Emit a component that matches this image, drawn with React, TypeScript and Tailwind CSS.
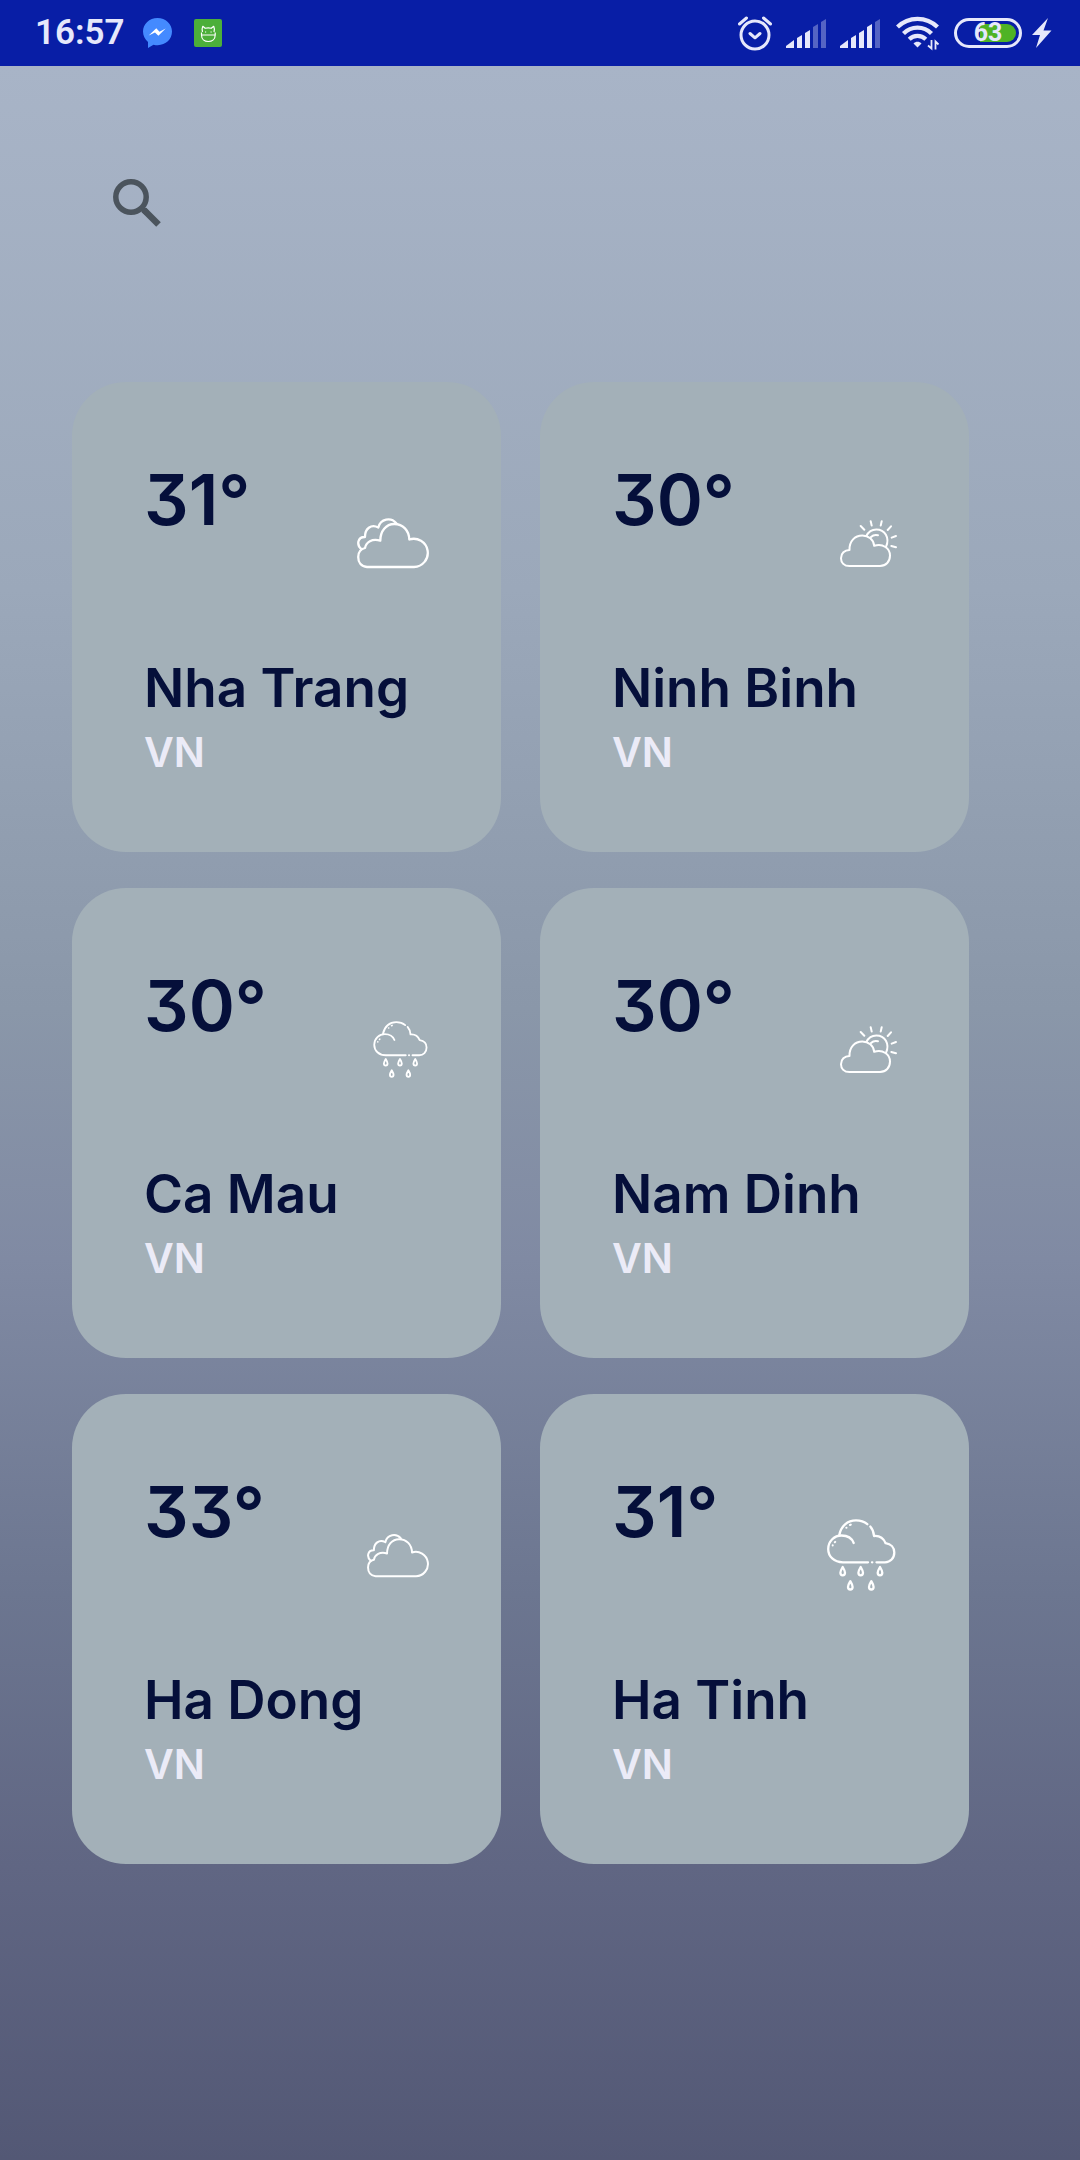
import React from "react";

type Weather = "cloud" | "partly" | "rain";

interface City {
  name: string;
  country: string;
  temp: number;
  weather: Weather;
  iconClass: string;
}

const cities: City[] = [
  { name: "Nha Trang", country: "VN", temp: 31, weather: "cloud", iconClass: "h-[52px] w-[72px]" },
  { name: "Ninh Binh", country: "VN", temp: 30, weather: "partly", iconClass: "h-[47px] w-[57px]" },
  { name: "Ca Mau", country: "VN", temp: 30, weather: "rain", iconClass: "h-[57px] w-[56px]" },
  { name: "Nam Dinh", country: "VN", temp: 30, weather: "partly", iconClass: "h-[47px] w-[57px]" },
  { name: "Ha Dong", country: "VN", temp: 33, weather: "cloud", iconClass: "h-[45px] w-[62px]" },
  { name: "Ha Tinh", country: "VN", temp: 31, weather: "rain", iconClass: "h-[72px] w-[70px]" },
];

const stroke = {
  fill: "none",
  stroke: "white",
  strokeWidth: 2.3,
  strokeLinecap: "round" as const,
  strokeLinejoin: "round" as const,
};

function CloudIcon({ className }: { className: string }) {
  return (
    <svg viewBox="0 0 72 52" className={className} aria-label="Cloudy" {...stroke}>
      <path d="M10 50C4 49.500 1.200 45 1.200 40C1.200 35 3.600 32 8 31C9 25 15 21.200 23.300 23.600C23.300 14 29 7 37.300 7C46 7 52 13.500 52.300 22.500A14.100 14.100 0 1 1 57 50Z" />
      <path d="M4.500 32.300C-1 27.500.800 19.800 8 20C7.800 12 14 6.500 21.300 10.500C23.500 1.500 34 -.200 39.300 6.200" />
    </svg>
  );
}

function PartlyIcon({ className }: { className: string }) {
  return (
    <svg viewBox="0 0 57 47" className={className} aria-label="Partly cloudy" {...stroke} strokeWidth={2}>
      <path d="M9.500 46C4 46 1 42.500 1 38.200C1 33.500 4.500 30 9.500 30C9.200 21 15 15.600 22.300 15.600C28.500 15.600 33.500 19.500 34.200 25.800C43 23 50 28.500 50 35.500C50 41.500 46 46 40 46Z" />
      <path d="M26.300 16C28.500 11.500 32 9.400 36.300 9.400C45 9.400 50 18 46 26.800" />
      <path d="M31 17C33 15 35.500 14.500 38 15.200" />
      <path d="M20.700 6L24.300 9.700M30.700 1.200L31.700 5.600M41.700 1.200L40.700 5.600M51 6.300L47.700 10M56 16L51.700 17.600M56 27.200L51.300 26" />
    </svg>
  );
}

function RainIcon({ className }: { className: string }) {
  return (
    <svg viewBox="0 0 70 72" className={className} aria-label="Rain" {...stroke}>
      <path d="M41 43.300H16C7 43.300 1.200 37.500 1.200 30C1.200 22 7.500 16.500 14.500 16.500C20.500 16.500 25 19.500 26.700 24" />
      <path d="M12.300 16C14 7 20.500 1.400 29 1.400C33.500 1.400 37.500 2.800 40.300 5.200" />
      <path d="M43.300 7.500C45.500 10 46.800 13.500 47 17C52.500 16.500 56.500 19.300 58.600 24.200C64 25 67.300 28.700 67.300 33.500C67.300 39.200 63.300 43.300 58 43.300H49.500M45 43.300H45.300" />
      <path d="M19.300 8.800H19.500M23 6L23.800 5.600M5.700 26.300V26.600M7.800 23.300L8.200 22.900" strokeWidth="2" />
      {[
        [15.7, 47],
        [33.7, 47],
        [53, 47],
        [23.3, 61.2],
        [44.3, 61.2],
      ].map(([x, y]) => (
        <path
          key={`${x}-${y}`}
          d="M0 1C-1.500 3.500-2.300 5-2.300 6.800A2.300 2.500 0 0 0 2.300 6.800C2.300 5 1.500 3.500 0 1Z"
          transform={`translate(${x} ${y})`}
        />
      ))}
    </svg>
  );
}

function WeatherIcon({ kind, className }: { kind: Weather; className: string }) {
  if (kind === "cloud") return <CloudIcon className={className} />;
  if (kind === "partly") return <PartlyIcon className={className} />;
  return <RainIcon className={className} />;
}

function Signal({ active }: { active: number }) {
  const bars = ["M0 29V27L8 21V29Z", "M11 29V19L16 16V29Z", "M19 29V14L24 11V29Z", "M27 29V8L32 5V29Z", "M35 29V3L40 0V29Z"];
  return (
    <svg viewBox="0 0 40 29" className="h-[29px] w-10" fill="#e6e8fb" aria-label="Signal">
      {bars.map((d, i) => (
        <path key={d} d={d} opacity={i < active ? 1 : 0.35} />
      ))}
    </svg>
  );
}

function StatusBar() {
  return (
    <header className="flex h-[66px] items-center justify-between bg-[#081ea6] pr-7 pl-[35px] font-[Roboto,sans-serif] text-[#e6e8fb]">
      <div className="flex items-center">
        <span className="text-[35px] leading-10 font-semibold">16:57</span>
        <svg viewBox="0 0 29 30" className="ml-[18px] h-[30px] w-[29px]" aria-label="Messenger">
          <path d="M14.500 0C6.300 0 0 6 0 13.600C0 17.800 1.900 21.500 5 24V30L10.500 26.700C20.500 29.200 29 22.600 29 13.600C29 6 22.700 0 14.500 0Z" fill="#448aff" />
          <path d="M5.700 17.600L13.300 10.300L16.500 13.700L22.700 10.500L15.400 17.700L12 14.500Z" fill="white" />
        </svg>
        <svg viewBox="0 0 28 28" className="ml-[22px] h-7 w-7" fill="none" stroke="white" strokeLinejoin="round" aria-label="App notification">
          <rect width="28" height="28" rx="2" fill="#4caf3a" stroke="none" />
          <path
            d="M8.500 13C7.800 11 8 9 8.800 7.300L11.200 9.300C13 8.700 15.500 8.700 17.300 9.300L19.700 7.300C20.500 9 20.700 11 20 13M7.500 16H21.200C21.200 20 18.200 22.500 14.300 22.500C10.400 22.500 7.500 20 7.500 16ZM7.500 16V13.500M21.200 16V13.500M11 13H12.200M16.500 13H17.700"
            strokeWidth="1.200"
          />
        </svg>
      </div>
      <div className="flex items-center">
        <svg viewBox="0 0 36 36" className="mr-[13px] h-9 w-9" fill="none" stroke="#e6e8fb" strokeWidth="3" strokeLinecap="round" strokeLinejoin="round" aria-label="Alarm">
          <circle cx="18" cy="20" r="14" />
          <path d="M2.500 9L9.500 3M33.500 9L26.500 3M13 18.500L18 22.800L23 18.500" />
        </svg>
        <Signal active={3} />
        <span className="ml-3.5 flex">
          <Signal active={4} />
        </span>
        <svg viewBox="0 0 44 36" className="ml-4 h-9 w-11" fill="none" stroke="#e6e8fb" strokeWidth="4.200" aria-label="Wi-Fi">
          <path d="M1.500 12A28.500 28.500 0 0 1 41.500 12" />
          <path d="M7.500 18.500A19.500 19.500 0 0 1 35.500 18.500" />
          <path d="M13.200 24.200A12 12 0 0 1 29.800 24.200" />
          <path d="M17.500 28.500C19.500 26 23.500 26 25.500 28.500L21.500 32.500Z" fill="#e6e8fb" stroke="none" />
          <path d="M35.500 25V33.500L32 30.500M39.500 34.500V26.500L42.500 29.500" strokeWidth="1.800" />
        </svg>
        <div className="relative ml-3.5 flex h-[30px] w-[68px] items-center justify-center rounded-full border-[3px] border-[#e6e8fb] p-[3px]">
          <div className="absolute inset-[3px] overflow-hidden rounded-full bg-linear-to-r from-transparent from-35% to-[#4fb325] to-35%" />
          <span className="relative text-[25px] leading-6 font-bold">63</span>
        </div>
        <svg viewBox="0 0 20 30" className="ml-2.5 h-[30px] w-5" fill="#e6e8fb" aria-label="Charging">
          <path d="M16 0L0 17H8L4 30L19.500 12.500H11.500Z" />
        </svg>
      </div>
    </header>
  );
}

function CityCard({ city }: { city: City }) {
  return (
    <article className="rounded-[54px] bg-[#a3b0b8] px-[72px] pt-[72px] pb-[76px] text-[#050f3a]">
      <div className="flex justify-between">
        <p className="text-[70px] leading-[92px] font-semibold [font-feature-settings:'cv09']">{city.temp}°</p>
        <div className="mt-12 flex h-[82px] shrink-0 items-center">
          <WeatherIcon kind={city.weather} className={city.iconClass} />
        </div>
      </div>
      <h2 className="mt-[72px] text-[53px] leading-[64px] font-semibold whitespace-nowrap">{city.name}</h2>
      <p className="mt-2 text-[41px] leading-[48px] font-semibold text-[#ebebf7]">{city.country}</p>
    </article>
  );
}

export default function App() {
  return (
    <div className="flex min-h-screen flex-col font-[Inter,sans-serif]">
      <StatusBar />
      <main className="grow bg-[linear-gradient(180deg,#a8b4c7_0%,#9ba8ba_25%,#8a97a9_45%,#808aa3_57%,#6c7690_73%,#606683_86%,#535875_100%)] pb-[296px]">
        <div className="pt-[113px] pl-[113px]">
          <button type="button" aria-label="Search" className="block">
            <svg viewBox="0 0 48 48" className="h-12 w-12" fill="none" stroke="#4b545d" aria-hidden="true">
              <circle cx="18" cy="18" r="15.200" strokeWidth="5.500" />
              <path d="M31 31L45.500 45.500" strokeWidth="6.500" />
              <path d="M28.500 33V29H33L36 32L32 36Z" fill="#4b545d" stroke="none" />
            </svg>
          </button>
        </div>
        <section aria-label="Cities" className="mt-[155px] grid grid-cols-2 gap-x-[39px] gap-y-9 pr-[111px] pl-[72px]">
          {cities.map((city) => (
            <CityCard key={city.name} city={city} />
          ))}
        </section>
      </main>
    </div>
  );
}
